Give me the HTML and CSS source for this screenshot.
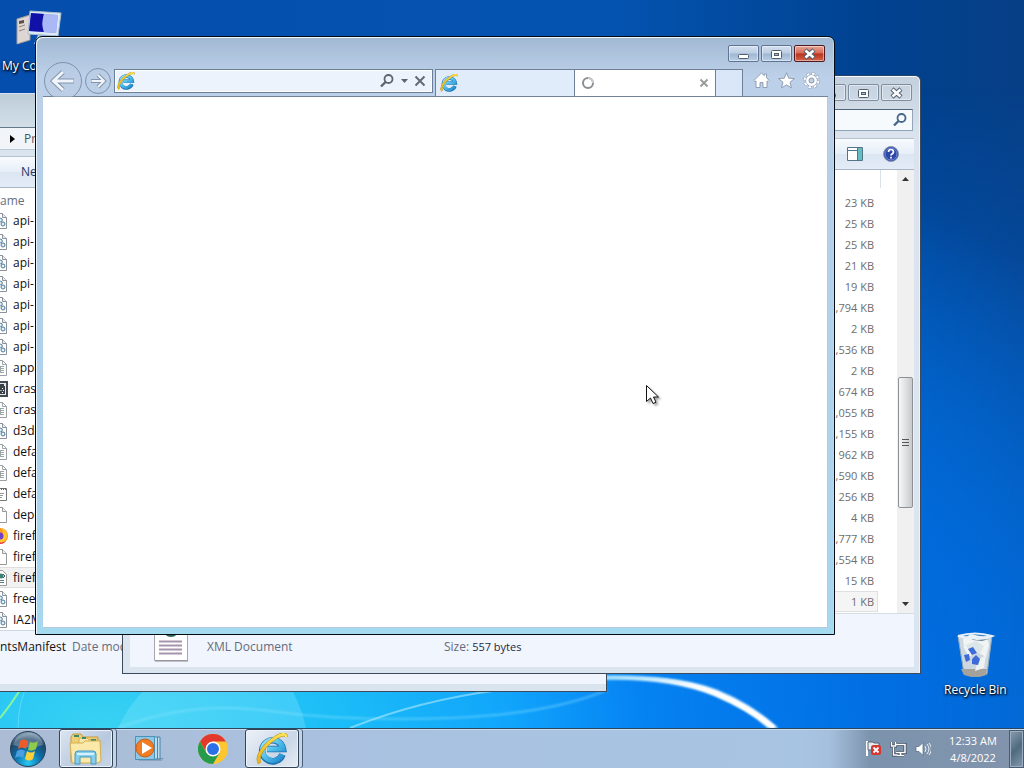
FILE: index.html
```html
<!DOCTYPE html>
<html lang="en">
<head>
<meta charset="utf-8">
<title>Desktop</title>
<link rel="stylesheet" href="styles.css">
</head>
<body>
<svg class="defs" aria-hidden="true">
  <defs>
    <linearGradient id="gBlue" x1="0" y1="0" x2="1" y2="1"><stop offset="0" stop-color="#9be4fb"/><stop offset=".5" stop-color="#4fbdea"/><stop offset="1" stop-color="#1e86cd"/></linearGradient>
    <linearGradient id="gGold" x1="0" y1="1" x2="1" y2="0"><stop offset="0" stop-color="#e9b51c"/><stop offset="1" stop-color="#ffe65a"/></linearGradient>
    <symbol id="ie" viewBox="0 0 32 32">
      <path d="M26.500 21.500A10.500 10.500 0 1 1 27 16H11" fill="none" stroke="#1c6fae" stroke-width="6.500"/>
      <path d="M26.200 21.500A10.300 10.300 0 1 1 27 16H11" fill="none" stroke="url(#gBlue)" stroke-width="5"/>
      <path d="M4 30C-1 25 8 12 19 5c6-4 11-5 11-1" fill="none" stroke="#b58a17" stroke-width="3.800"/>
      <path d="M4 30C-1 25 8 12 19 5c6-4 11-5 11-1" fill="none" stroke="url(#gGold)" stroke-width="2.800"/>
    </symbol>
    <symbol id="dll" viewBox="0 0 16 16">
      <path d="M1.500.5h9l4 4v11h-13z" fill="#fff" stroke="#8b929b"/><path d="M10.500.5v4h4" fill="#e8ecf0" stroke="#8b929b"/>
      <circle cx="8.500" cy="7" r="1.800" fill="#e3f0f6" stroke="#4c7898"/><circle cx="11" cy="11" r="2" fill="#e3f0f6" stroke="#4c7898"/><circle cx="5" cy="10" r="1.500" fill="#fff" stroke="#4c7898"/>
    </symbol>
    <symbol id="txt" viewBox="0 0 16 16">
      <path d="M1.500.5h9l4 4v11h-13z" fill="#fff" stroke="#9a9fa4"/><path d="M10.500.5v4h4M4 6.500h8M4 8.500h8M4 10.500h8M4 12.500h8M8.500 6v7" fill="none" stroke="#9ba6a6"/>
    </symbol>
    <symbol id="doc" viewBox="0 0 16 16"><path d="M1.500.5h9l4 4v11h-13z" fill="#fff" stroke="#999"/><path d="M10.500.5v4h4" fill="#eee" stroke="#999"/></symbol>
    <symbol id="exe" viewBox="0 0 16 16"><path d="M1 1h14v14H1z" fill="#e5e8e8" stroke="#444b50" stroke-width="2"/><path d="M4 5h9v8H4z" fill="#394347"/><path d="M7 3h5v2H7z" fill="#394347"/><path d="M10.500 7v1M12 9.500h-1M10.500 11v1M8.500 9.500h1M7 7v5" stroke="#fff"/></symbol>
    <symbol id="ini" viewBox="0 0 16 16"><path d="M.5 2.500h14v12H.5z" fill="#fff" stroke="#777"/><path d="M1 3h13" stroke="#666" stroke-width="2" stroke-dasharray="1 1"/><path d="M5 7.500h7M6 9.500h5M5 11.500h5" stroke="#93999d"/></symbol>
    <symbol id="xml" viewBox="0 0 16 16"><path d="M1.500.5h9l4 4v11h-13z" fill="#fff" stroke="#999"/><path d="M4 10.500h8M4 12.500h8" stroke="#627e83"/><circle cx="9" cy="6" r="2.500" fill="#3c8070"/><path d="M11 4l2 2-2 2" fill="none" stroke="#456"/></symbol>
    <symbol id="fox" viewBox="0 0 16 16"><circle cx="8" cy="8" r="8" fill="#ff9722"/><path d="M10 0c5 3 7 8 3 13-4 4-9 3-12 0 8 1 12-4 9-13" fill="#ffc82c"/><path d="M0 9c2 8 10 9 14 4-5 3-9 1-10-4" fill="#ee3855"/><circle cx="8" cy="8" r="3.500" fill="#7040cb"/></symbol>
    <symbol id="min" viewBox="0 0 16 12"><rect x="2.500" y="6.500" width="10" height="4" rx="1" fill="#fff" stroke="#515e70"/></symbol>
    <symbol id="max" viewBox="0 0 16 12"><rect x="2.500" y="2.500" width="10" height="8" rx="1" fill="#fff" stroke="#515e70"/><rect x="5.500" y="5.500" width="4" height="2" fill="#aebdce" stroke="#515e70"/></symbol>
    <symbol id="cls" viewBox="0 0 16 12"><path d="M3 2l9 8M12 2l-9 8" stroke="#515e70" stroke-width="4.500"/><path d="M3.500 2.500l8 7M11.500 2.500l-8 7" stroke="#fff" stroke-width="2.600"/></symbol>
    <symbol id="lens" viewBox="0 0 16 16"><circle cx="9.500" cy="6" r="4" fill="none" stroke="currentColor" stroke-width="1.800"/><path d="M6.500 9L2 13.500" stroke="currentColor" stroke-width="2.400"/></symbol>
  </defs>
</svg>

<div class="desktop">
  <main class="workspace">
    <svg class="wallpaper" viewBox="0 0 1024 728" preserveAspectRatio="none" aria-hidden="true">
      <defs>
        <filter id="soft"><feGaussianBlur stdDeviation="1"/></filter>
        <linearGradient id="streak" gradientUnits="userSpaceOnUse" x1="590" y1="680" x2="780" y2="728"><stop offset="0" stop-color="#8cd8ff"/><stop offset=".5" stop-color="#fff"/></linearGradient>
      </defs>
      <path d="M118 728Q135 690 180 660H270Q298 690 306 728z" fill="#9defff" opacity=".25"/>
      <path d="M118 728Q190 700 270 711T450 718T607 690" fill="none" stroke="#9beaff" stroke-width="2" opacity=".4" filter="url(#soft)"/>
      <path d="M350 728Q420 700 500 690" fill="none" stroke="#b9efff" stroke-width="2" opacity=".55"/>
      <path d="M0 718Q10 706 20 690" fill="none" stroke="#86f49c" stroke-width="2"/>
      <path d="M18 728Q18 700 30 680" fill="none" stroke="#80e8ff" opacity=".5"/>
      <path d="M590 677Q670 674 715 695Q748 709 768 728L778 728Q752 704 717 690Q670 672 590 679z" fill="url(#streak)" stroke="#8ad2ff" stroke-width="1" filter="url(#soft)"/>
      <path d="M600 678Q670 676 715 694Q750 709 774 728" fill="none" stroke="url(#streak)" stroke-width="4" filter="url(#soft)"/>
    </svg>

    <div class="shortcut shortcut-computer">
      <svg width="48" height="48" viewBox="0 0 48 48" aria-hidden="true">
        <path d="M1 11l13-4v25L1 36z" fill="#ded6d2" stroke="#a59b98"/><path d="M3 13l5-1v3l-5 1z" fill="#594e48"/><path d="M3 19l6-2M3 23l6-2" stroke="#8f8580"/>
        <path d="M14 3l31 2-3 23-30-2z" fill="#dceaf6" stroke="#aabccc"/><path d="M15 5l27 2-2 18-27-2z" fill="#8290ea"/><path d="M15 5l13 1q-3 10 0 18l-15-1z" fill="#1111a8"/><path d="M28 6l14 1-2 18-12-1q-3-8 0-18" fill="#aab8f6"/>
        <path d="M22 27l10 1 2 8H18z" fill="#c3d4e2"/>
      </svg>
      <span>My Computer</span>
    </div>

    <section class="window files-left" aria-label="Program files">
      <div class="glass-bar"></div>
      <div class="crumbs"><svg width="6" height="8" viewBox="0 0 6 8" aria-hidden="true"><path d="M0 0l5 4-5 4z" fill="#000"/></svg><span>Program Files</span></div>
      <div class="commands"><button type="button">New folder</button></div>
      <div class="column-head">Name</div>
      <ul class="file-list">
        <li><svg><use href="#dll"/></svg>api-</li>
        <li><svg><use href="#dll"/></svg>api-</li>
        <li><svg><use href="#dll"/></svg>api-</li>
        <li><svg><use href="#dll"/></svg>api-</li>
        <li><svg><use href="#dll"/></svg>api-</li>
        <li><svg><use href="#dll"/></svg>api-</li>
        <li><svg><use href="#dll"/></svg>api-</li>
        <li><svg><use href="#txt"/></svg>appl</li>
        <li><svg><use href="#exe"/></svg>cras</li>
        <li><svg><use href="#txt"/></svg>cras</li>
        <li><svg><use href="#dll"/></svg>d3dc</li>
        <li><svg><use href="#txt"/></svg>defa</li>
        <li><svg><use href="#txt"/></svg>defa</li>
        <li><svg><use href="#ini"/></svg>defa</li>
        <li><svg><use href="#doc"/></svg>depe</li>
        <li><svg><use href="#fox"/></svg>firef</li>
        <li><svg><use href="#doc"/></svg>firef</li>
        <li class="selected"><svg><use href="#xml"/></svg>firef</li>
        <li><svg><use href="#dll"/></svg>freeb</li>
        <li><svg><use href="#dll"/></svg>IA2M</li>
      </ul>
      <div class="details"><strong>ntsManifest</strong><span>Date modified:</span></div>
    </section>

    <section class="window files-right" aria-label="Files">
      <div class="caption">
        <button type="button" aria-label="Minimize"><svg><use href="#min"/></svg></button>
        <button type="button" aria-label="Maximize"><svg><use href="#max"/></svg></button>
        <button type="button" aria-label="Close"><svg><use href="#cls"/></svg></button>
      </div>
      <div class="search"><input type="text" aria-label="Search"><svg class="lens"><use href="#lens"/></svg></div>
      <div class="commands right-commands">
        <button type="button" aria-label="Preview pane"><svg width="16" height="14" viewBox="0 0 16 14"><path d="M.5.5h15v13H.5z" fill="#fff" stroke="#537489"/><path d="M10 1h5v12h-5z" fill="#65bdc2"/><path d="M0 3.500h10M10.500 1v12" stroke="#537489"/></svg></button>
        <button type="button" aria-label="Help"><svg width="16" height="16" viewBox="0 0 16 16"><circle cx="8" cy="8" r="7.500" fill="#2d48a8" stroke="#8995ab"/><circle cx="8" cy="8" r="6" fill="none" stroke="#7588d5"/><path d="M5.500 6q0-2.500 2.500-2.500T10.500 6Q10.500 7 9 8q-1 .7-1 1.500M8 10.800v1.800" fill="none" stroke="#fff" stroke-width="1.700"/></svg></button>
      </div>
      <div class="pane">
        <ul class="sizes">
          <li>23 KB</li><li>25 KB</li><li>25 KB</li><li>21 KB</li><li>19 KB</li><li>1,794 KB</li><li>2 KB</li><li>1,536 KB</li><li>2 KB</li><li>674 KB</li><li>1,055 KB</li><li>1,155 KB</li><li>962 KB</li><li>1,590 KB</li><li>256 KB</li><li>4 KB</li><li>1,777 KB</li><li>1,554 KB</li><li>15 KB</li><li class="selected">1 KB</li>
        </ul>
        <div class="scrollbar">
          <svg width="7" height="4" viewBox="0 0 7 4"><path d="M0 4l3.500-4L7 4z" fill="#333"/></svg>
          <div class="track"><div class="thumb"><svg width="7" height="8" viewBox="0 0 7 8"><path d="M0 .5h7M0 3.500h7M0 6.500h7" stroke="#555"/></svg></div></div>
          <svg width="7" height="4" viewBox="0 0 7 4"><path d="M0 0l3.500 4L7 0z" fill="#333"/></svg>
        </div>
      </div>
      <div class="details file-details">
        <svg width="36" height="46" viewBox="0 0 36 46" aria-hidden="true"><path d="M1.500.5h33v44h-33z" fill="#fff" stroke="#a8a5ad"/><path d="M2 45h33" stroke="#8c8991"/><circle cx="18" cy="13" r="8" fill="#2f6558"/><path d="M6 25.500h23M6 29.500h23M6 33.500h23M6 37.500h23" stroke="#a595ac" stroke-width="2"/></svg>
        <span class="kind">XML Document</span><span>Size:</span><b>557 bytes</b>
      </div>
    </section>

    <section class="window browser" aria-label="Internet Explorer">
      <div class="caption">
        <button type="button" aria-label="Minimize"><svg><use href="#min"/></svg></button>
        <button type="button" aria-label="Maximize"><svg><use href="#max"/></svg></button>
        <button type="button" class="close" aria-label="Close"><svg><use href="#cls"/></svg></button>
      </div>
      <div class="navbar">
        <div class="nav-buttons">
          <button type="button" aria-label="Back"><svg width="38" height="38" viewBox="0 0 38 38"><circle cx="19" cy="19" r="18.500" fill="#b9cce3" fill-opacity=".5" stroke="#7e92ab"/><path d="M19 10L9.500 19l9.500 9M10 19h20" fill="none" stroke="#8294ac" stroke-width="5"/><path d="M19 10L9.500 19l9.500 9M10 19h19.500" fill="none" stroke="#f0f5fc" stroke-width="3"/></svg></button>
          <button type="button" aria-label="Forward"><svg width="26" height="26" viewBox="0 0 26 26"><circle cx="13" cy="13" r="12.500" fill="#b9cce3" fill-opacity=".4" stroke="#7e92ab"/><path d="M13 7l6 6-6 6M6 13h12" fill="none" stroke="#8294ac" stroke-width="4"/><path d="M13 7l6 6-6 6M6.500 13H18" fill="none" stroke="#f0f5fc" stroke-width="2"/></svg></button>
        </div>
        <div class="address">
          <svg width="18" height="18" aria-hidden="true"><use href="#ie"/></svg>
          <input type="text" aria-label="Address">
          <button type="button" aria-label="Search"><svg class="lens"><use href="#lens"/></svg></button>
          <button type="button" aria-label="Search options"><svg width="7" height="4" viewBox="0 0 7 4"><path d="M0 0h7L3.500 4z" fill="#5e646c"/></svg></button>
          <button type="button" aria-label="Stop"><svg width="12" height="12" viewBox="0 0 12 12"><path d="M1.500 1.500l9 9M10.500 1.500l-9 9" stroke="#646a72" stroke-width="2"/></svg></button>
        </div>
        <div class="tabs">
          <button type="button" class="tab" aria-label="Internet Explorer tab"><svg width="18" height="18"><use href="#ie"/></svg></button>
          <div class="tab active"><svg width="14" height="14" viewBox="0 0 14 14" aria-hidden="true"><circle cx="7" cy="7" r="5" fill="none" stroke="#8b8f94" stroke-width="2"/><path d="M7 2a5 5 0 0 1 5 5" fill="none" stroke="#c9cccf" stroke-width="2"/></svg><button type="button" aria-label="Close tab"><svg width="10" height="10" viewBox="0 0 10 10"><path d="M1.500 1.500l7 7M8.500 1.500l-7 7" stroke="#9b9b9b" stroke-width="2"/></svg></button></div>
          <button type="button" class="new-tab" aria-label="New tab"></button>
        </div>
        <div class="tools">
          <button type="button" aria-label="Home"><svg width="17" height="17" viewBox="0 0 17 17"><path d="M8.500 1L.8 8.500 2 9.700l1-.8V15.500h4V10.500h3v5h4V8.900l1 .8 1.200-1.200L13.500 5.700V2h-2.200v1.700z" fill="#fff" stroke="#8796ac" stroke-width=".9"/></svg></button>
          <button type="button" aria-label="Favorites"><svg width="17" height="17" viewBox="0 0 17 17"><path d="M8.500.8l2.200 5.400 5.700.4-4.400 3.700 1.500 5.600-5-3.100-5 3.100L5 10.300.6 6.600l5.700-.4z" fill="#fff" stroke="#8796ac" stroke-width=".9"/></svg></button>
          <button type="button" aria-label="Tools"><svg width="17" height="17" viewBox="0 0 17 17"><circle cx="8.500" cy="8.500" r="6.700" fill="none" stroke="#8796ac" stroke-width="3.400" stroke-dasharray="3.200 2.060"/><circle cx="8.500" cy="8.500" r="6.700" fill="none" stroke="#fff" stroke-width="2.400" stroke-dasharray="2.600 2.660" stroke-dashoffset="-.3"/><circle cx="8.500" cy="8.500" r="5.600" fill="none" stroke="#8796ac" stroke-width=".7"/><circle cx="8.500" cy="8.500" r="4" fill="none" stroke="#fff" stroke-width="2.800"/><circle cx="8.500" cy="8.500" r="2.500" fill="#c2d2e6" stroke="#8796ac"/></svg></button>
        </div>
      </div>
      <div class="page"></div>
    </section>

    <div class="shortcut shortcut-bin">
      <svg width="42" height="48" viewBox="0 0 42 48" aria-hidden="true">
        <path d="M4 5h34l-5 38q-12 5-23 0z" fill="#ccd7df" stroke="#8fa7bc"/><path d="M7 38h26l-1 6q-10 4-22 0z" fill="#a4a29a"/>
        <path d="M9 8l8-5 8 2 8 1 2 8-3 12-9-5-8 5-5-9z" fill="#f0f4f5"/><path d="M12 14l10-4 8 5-4 7-10-1z" fill="#dce5e8"/><path d="M24 29l8-5-2 13-9 3z" fill="#eef2f3"/><path d="M16 7l7 2 12-1-7 2-9-1z" fill="#687e8e"/>
        <path d="M4 5q17-5 34 0q-17 5-34 0" fill="none" stroke="#e8f2f8" stroke-width="2"/>
        <path d="M14 18l5-2 4 6-5 2zM10 24l5-1 1 6-4 2zM18 28l4-4 4 4-2 6-6-1z" fill="#3e6bd8"/>
      </svg>
      <span>Recycle Bin</span>
    </div>

    <svg class="cursor" width="18" height="24" viewBox="0 0 18 24" aria-hidden="true"><path d="M1.500 1.500v16l4-3.500 2.500 5.500 3-1.300-2.500-5.200h5z" fill="#fff" stroke="#111" stroke-linejoin="miter"/></svg>
  </main>

  <footer class="taskbar">
    <button type="button" class="start" aria-label="Start"><svg width="38" height="38" viewBox="0 0 38 38">
      <defs><radialGradient id="orb" cx=".5" cy=".9" r=".9"><stop offset="0" stop-color="#27c8f4"/><stop offset=".45" stop-color="#0c6ba5"/><stop offset=".75" stop-color="#204767"/><stop offset="1" stop-color="#8ba4b9"/></radialGradient></defs>
      <circle cx="19" cy="19" r="17.500" fill="url(#orb)" stroke="#23405c"/><path d="M4 15Q7 4 19 3t15 12Q20 20 4 15" fill="#fff" opacity=".25"/>
      <path d="M11 11q4-3 8 0l-2 8q-4-3-8 0z" fill="#ee5b2b"/><path d="M21 12q4 2 8-1l-2 8q-4 3-8 1z" fill="#8fcb48"/><path d="M8 21q4-3 8 0l-2 7q-4-3-8 0z" fill="#4a9fe0"/><path d="M18 21q4 3 8 0l-2 8q-4 3-8 0z" fill="#fdd03a"/>
    </svg></button>
    <button type="button" class="task open" aria-label="Windows Explorer"><svg width="34" height="32" viewBox="0 0 34 32"><path d="M2 4l2-3h8l2 3h15v25H2z" fill="#efcf74" stroke="#c69b3d"/><path d="M10 5h8l2 2h11v22H10z" fill="#f8e7a6" stroke="#d2ad57"/><path d="M5 3h5M13 5h4M22 7h5" stroke="#3b8b67" stroke-width="2"/><path d="M1 10h13l2-2h15l1 20-3 2H3z" fill="#fae9a8" stroke="#d3ae55"/><path d="M6 31V21q0-3 3-3h15q3 0 3 3v10h-5v-7H11v7z" fill="#87cdee" stroke="#4397c4"/><path d="M8 21h17" stroke="#d5f2fd" stroke-width="2"/></svg></button>
    <button type="button" class="task" aria-label="Media Player"><svg width="30" height="28" viewBox="0 0 30 28"><path d="M5 25h22l2-2" stroke="#7389a0" stroke-width="2" opacity=".5"/><path d="M20 2h6v22h-6z" fill="#b9def1" stroke="#4886aa"/><path d="M23.500 2v22" stroke="#4886aa"/><path d="M1.500 1.500h19v23h-19z" fill="#8cc8e6" stroke="#4c91b8"/><circle cx="11" cy="13" r="9" fill="#f17c22" stroke="#ca5f18"/><path d="M8 7l10 6-10 6z" fill="#fff"/></svg></button>
    <button type="button" class="task" aria-label="Chrome"><svg width="30" height="30" viewBox="0 0 30 30"><circle cx="15" cy="15" r="15" fill="#fbc62f"/><path d="M2 7.500A15 15 0 0 1 28 7.500H15L8.500 18.500z" fill="#e3392d"/><path d="M2 7.500A15 15 0 0 0 15 30l6.500-11-13 0z" fill="#269b4b"/><circle cx="15" cy="15" r="7.500" fill="#fff"/><circle cx="15" cy="15" r="6" fill="#2b70e4"/></svg></button>
    <button type="button" class="task open focused" aria-label="Internet Explorer"><svg width="32" height="32"><use href="#ie"/></svg></button>
    <div class="tray">
      <button type="button" aria-label="Action Center"><svg width="17" height="17" viewBox="0 0 17 17"><path d="M2 1v15" stroke="#fff" stroke-width="2"/><path d="M3 2h5l1 1h5v7H3z" fill="#e6ebf0" stroke="#566576"/><path d="M6 7.500q0-2.500 2.500-2.500h5q2.500 0 2.500 2.500v5q0 2.500-2.500 2.500h-5Q6 15 6 12.500z" fill="#d53630"/><path d="M8.500 7.500l5 5M13.500 7.500l-5 5" stroke="#fff" stroke-width="1.800"/></svg></button>
      <button type="button" aria-label="Network"><svg width="17" height="16" viewBox="0 0 17 16"><path d="M5 3.500h10v8H6M10.500 12v2M7 14.500h7M3.500 6v8h4M1.500 1v4h4V1" fill="none" stroke="#39485b" stroke-width="3"/><path d="M5 3.500h10v8H6M10.500 12v2M7 14.500h7M3.500 6v8h4M1.500 1v4h4V1" fill="none" stroke="#fff" stroke-width="1.500"/></svg></button>
      <button type="button" aria-label="Volume"><svg width="16" height="16" viewBox="0 0 16 16"><path d="M1 5.500h3L8 1.500v13l-4-4H1z" fill="#fff" stroke="#53647a" stroke-width=".7"/><path d="M10 5q2 3 0 6M12 3q4 5 0 10M14 2q5 6 0 12" fill="none" stroke="#edf2f7"/></svg></button>
      <time class="clock" datetime="2022-04-08T00:33"><span>12:33 AM</span><span>4/8/2022</span></time>
      <button type="button" class="show-desktop" aria-label="Show desktop"></button>
    </div>
  </footer>
</div>
</body>
</html>
```
FILE: styles.css
```css
* { box-sizing: border-box; }
body { margin: 0; font: 12px/16px "Open Sans", "Noto Sans", sans-serif; color: #111; }
button { border: 0; margin: 0; padding: 0; background: none; font: inherit; color: inherit; display: flex; align-items: center; justify-content: center; flex: none; }
input { border: 0; padding: 0; background: none; font: inherit; min-width: 0; flex: 1; outline: 0; }
ul { list-style: none; margin: 0; padding: 0; }
svg { flex: none; display: block; }
.defs { position: absolute; width: 0; height: 0; }

.desktop { height: 100vh; display: flex; flex-direction: column; overflow: hidden; }
.workspace {
  position: relative; flex: 1; overflow: hidden;
  background:
    radial-gradient(ellipse 540px 330px at 10% 100%, #38d2f2 0, #1bbcf8 45%, transparent 100%),
    radial-gradient(ellipse 820px 620px at 48% 100%, #0a94ff 0, #0582f2 40%, transparent 100%),
    linear-gradient(90deg, #054ead 0, #0453b0 60%, #00418f 86%, #073f86 100%);
  background-color: #0453b0;
}
.workspace::before { content: ""; position: absolute; inset: 0; background: linear-gradient(180deg, transparent 12%, rgba(0, 106, 224, 0.75) 80%); mask-image: linear-gradient(90deg, transparent 50%, #000 88%, rgba(0, 0, 0, 0.8)); }
.wallpaper { position: absolute; inset: 0; width: 100%; height: 100%; }

.shortcut { position: absolute; display: flex; flex-direction: column; align-items: center; color: #fff; white-space: nowrap; text-shadow: 1px 1px 2px #000, 0 1px 3px #000; }
.shortcut-computer { left: 2px; top: 8px; gap: 2px; }
.shortcut-bin { left: 944px; top: 631px; gap: 3px; }
.cursor { position: absolute; left: 645px; top: 384px; filter: drop-shadow(2px 2px 1px rgba(0, 0, 0, 0.35)); }

.window { position: absolute; display: flex; flex-direction: column; border: 1px solid #3c4a5c; overflow: hidden; }
.caption { display: flex; justify-content: flex-end; gap: 2px; }
.caption button { width: 31px; height: 17px; border: 1px solid #7e8d9f; border-radius: 2px; box-shadow: inset 0 0 0 1px rgba(255, 255, 255, 0.45); }
.caption svg { width: 16px; height: 12px; }
.lens { width: 16px; height: 16px; color: #46668a; }
.commands { display: flex; align-items: center; height: 32px; flex: none; background: linear-gradient(#f8fbfe, #e6eef8 50%, #dce6f3 51%, #e3ecf7); border-top: 1px solid #b5c3d1; border-bottom: 1px solid #a9b6c5; color: #2a3665; }
.details { display: flex; flex: 1; background: #f1f5fd; color: #646b7c; white-space: nowrap; }

.files-left { left: -16px; top: 93px; width: 623px; height: 599px; background: #d9e4ef; border-top-color: #d4e2ee; padding-bottom: 7px; }
.glass-bar { height: 33px; flex: none; background: linear-gradient(#bdcdd8, #d2dfe9); }
.crumbs { display: flex; align-items: center; gap: 8px; height: 23px; flex: none; padding-left: 25px; background: #f1f5f9; border-top: 1px solid #66788a; border-bottom: 1px solid #bccad7; color: #4d5560; margin-bottom: 6px; }
.files-left .commands { padding-left: 36px; }
.column-head { padding: 5px 6px 1px; background: #fff; color: #667083; height: 22px; flex: none; }
.file-list { background: #fff; flex: none; }
.file-list li { display: flex; align-items: center; gap: 5px; height: 21px; padding-left: 7px; }
.file-list svg { width: 16px; height: 16px; }
.file-list .selected { background: #f2f2f2; box-shadow: inset 0 0 0 1px #dedede; }
.files-left .details { padding: 8px 0 0 15px; gap: 6px; border-top: 1px solid #cdd7e3; }
.files-left strong { font-weight: 400; color: #111; }

.files-right { left: 122px; top: 75px; width: 799px; height: 599px; background: linear-gradient(#c3d0dd, #dbe4ee 60px, #dbe5f0); border-radius: 6px 6px 0 0; border-top-color: #24466c; box-shadow: inset 0 1px #f7fbff, inset -1px 0 #eaf2fb; padding: 8px 6px 6px 7px; }
.files-right .caption { margin: 0 2px 8px; }
.search { display: flex; align-items: center; align-self: flex-end; width: 190px; height: 22px; flex: none; margin: 0 1px 7px; padding-right: 4px; background: #f7fafd; border: 1px solid #93a5b8; border-top-color: #52677e; }
.right-commands { justify-content: flex-end; gap: 20px; padding-right: 15px; }
.pane { display: flex; background: #fff; height: 443px; flex: none; }
.sizes { flex: 1; padding: 22px 19px 0 0; color: #6d6d6d; font-size: 11px; text-align: right; background: linear-gradient(#d9e1e9, #d9e1e9) right 16px top 0 / 1px 18px no-repeat; }
.sizes li { height: 21px; padding: 3px 4px 2px; }
.sizes .selected { background: #f5f5f5; box-shadow: inset 0 0 0 1px #dfdfdf; }
.scrollbar { display: flex; flex-direction: column; align-items: center; width: 17px; padding: 7px 0; background: #f0f0f1; }
.track { flex: 1; width: 15px; padding-top: 196px; }
.thumb { display: flex; align-items: center; justify-content: center; height: 131px; border: 1px solid #8d9196; border-radius: 2px; background: linear-gradient(90deg, #f7f7f7, #e0e1e2 50%, #c7c9cb); }
.file-details { padding-left: 23px; border-top: 1px solid #d4dce7; }
.file-details svg { margin-top: 2px; }
.file-details > span, .file-details b { padding-top: 25px; }
.file-details .kind { margin-left: 18px; width: 237px; }
.file-details b { font-size: 11px; font-weight: 400; color: #202c4a; margin-left: 3px; }

.browser { left: 35px; top: 36px; width: 800px; height: 599px; border-color: #050b12; border-radius: 7px 7px 0 0; background: linear-gradient(#a2b9d3, #bdd0e9 40px, #bdd0e9 90px, #b6cfe8 130px, #a9d5ef 95%, #a3dbef); box-shadow: inset 1px 1px #e9f5ff, inset -1px 0 #a6e4f5; padding: 8px 6px 6px 7px; }
.browser .caption { margin: 0 3px 6px; }
.browser .caption button { border-color: #5f7490; background: linear-gradient(#d3e0ef, #bdcee3 48%, #9fb6d2 52%, #b9cfe7); }
.browser .caption .close { border-color: #4d1b21; background: linear-gradient(#e9a594, #d56b56 48%, #b8321c 52%, #d4654a); }
.navbar { display: flex; height: 29px; flex: none; border-bottom: 1px solid #73849a; }
.nav-buttons { display: flex; align-items: center; gap: 3px; width: 71px; height: 26px; flex: none; padding: 0 1px; }
.nav-buttons button { height: 26px; }
.address { display: flex; align-items: center; flex: 9; height: 24px; margin-top: 1px; padding: 0 6px 0 2px; gap: 6px; background: #edf3fc; border: 1px solid #6b7f97; box-shadow: inset 0 0 0 1px #fff; }
.address .lens { color: #5e646c; }
.tabs { display: flex; flex: 9; margin: 1px 0 0 2px; }
.tab { display: flex; align-items: center; justify-content: flex-start; flex: 1; padding: 0 6px 0 4px; background: #e1ecfb; border: 1px solid #6f8096; border-width: 1px 0 0 1px; }
.tab.active { justify-content: space-between; background: #fff; padding-left: 6px; }
.new-tab { width: 28px; background: #dae7f8; border: 1px solid #6f8096; border-bottom: 0; }
.tools { display: flex; align-items: center; gap: 8px; padding: 0 8px 4px 10px; flex: none; }
.page { flex: 1; background: #fff; border: 1px solid #b6cbdf; border-width: 0 1px 1px 0; }

.taskbar { display: flex; align-items: center; height: 40px; flex: none; border-top: 1px solid #2b4861; box-shadow: inset 0 1px #c9dbec; background: linear-gradient(90deg, #abbcd4, #a9c1df 30%, #a8c4e3 78%, #a5c0dd 81%, #7c93ad 85%, #8294ac 100%); }
.start { width: 55px; height: 39px; }
.task { width: 64px; height: 39px; }
.task.open { width: 54px; margin: 0 4px; border: 1px solid #314458; border-radius: 3px; background: linear-gradient(135deg, #dce5f0, #b8c9df 60%, #c8d6e6); box-shadow: inset 0 0 0 1px #eaf1f9, 3px 0 #c5d4e5, 4px 0 #485e78; }
.task.focused { margin-left: 0; background: linear-gradient(135deg, #edf2f8, #cad7e8 60%, #e7edf4); }
.tray { display: flex; align-items: center; margin-left: auto; gap: 8px; height: 100%; }
.clock { display: flex; flex-direction: column; align-items: center; color: #fff; font-size: 11px; width: 56px; margin-left: 6px; line-height: 17px; }
.show-desktop { width: 15px; height: 38px; border: 1px solid #485c70; box-shadow: inset 0 0 0 1px #9badbf; background: linear-gradient(135deg, #889dae, #506b7e 50%, #8299ac); }
```
